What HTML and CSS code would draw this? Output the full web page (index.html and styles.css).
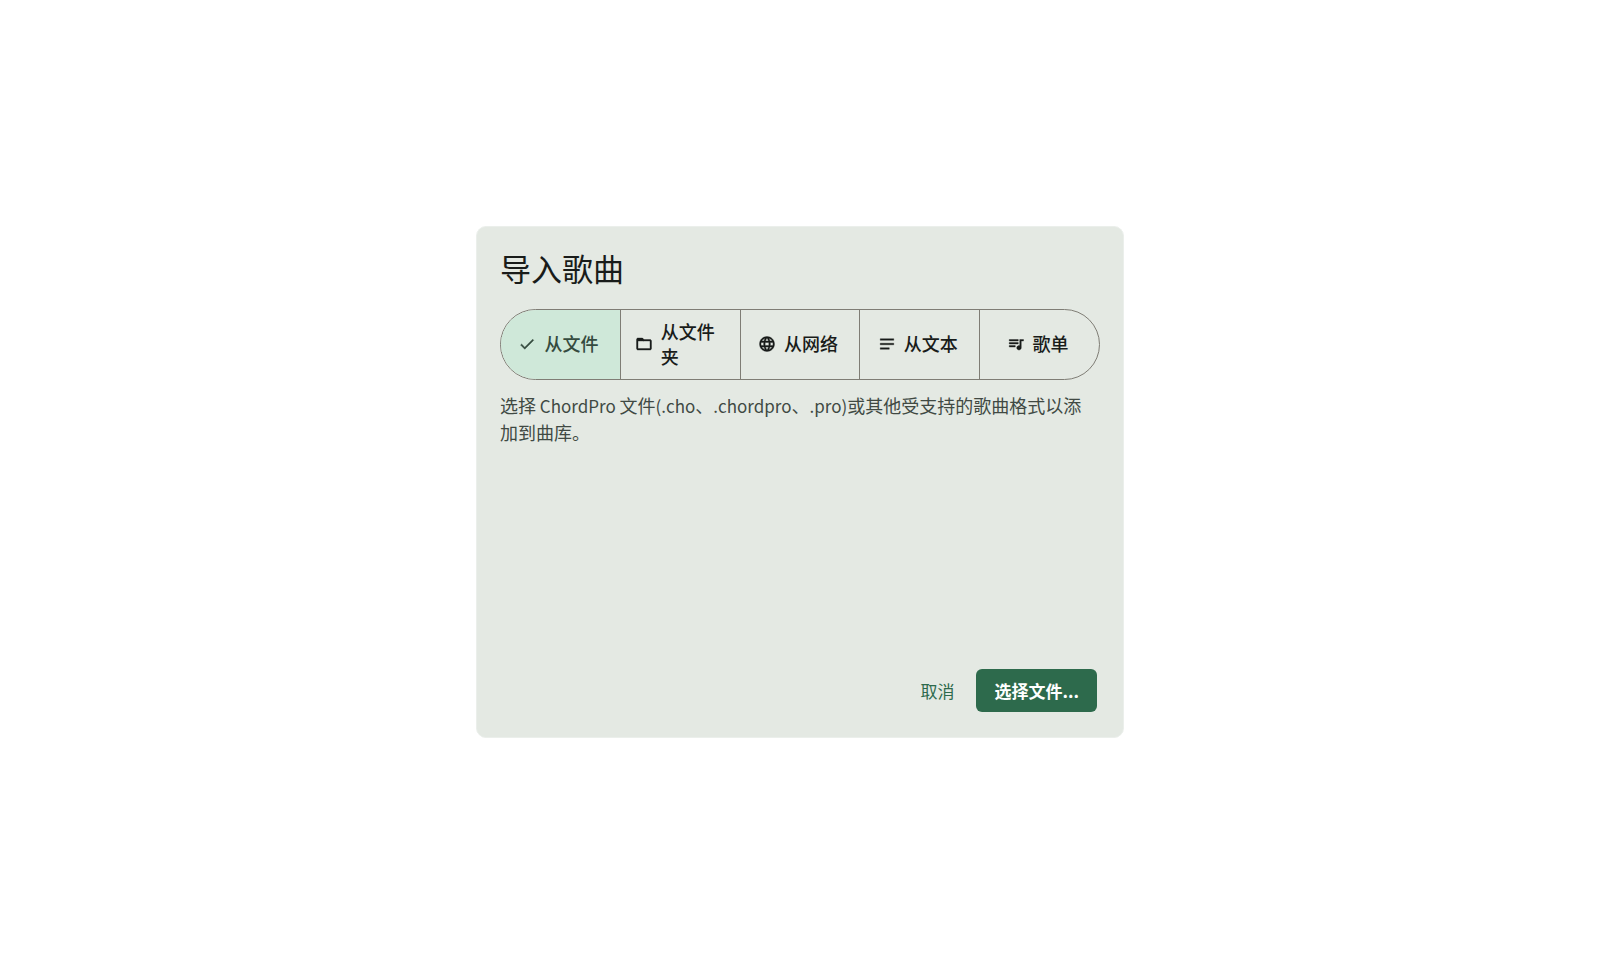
FILE: index.html
```html
<!DOCTYPE html>
<html lang="zh-CN">

	<head>
		<meta charset="UTF-8">
		<title>导入歌曲</title>
		<link rel="stylesheet" href="styles.css">
	</head>

	<body>
		<form class="dialog">
			<h1>导入歌曲</h1>

			<div class="tabs">
				<label class="tab">
					<input type="radio" name="source" checked>
					<svg viewBox="0 0 24 24"><path d="M9 16.17 4.83 12l-1.42 1.41L9 19 21 7l-1.41-1.41z"/></svg>
					<span>从文件</span>
				</label>
				<label class="tab">
					<input type="radio" name="source">
					<svg viewBox="0 0 24 24"><path d="m9.17 6 2 2H20v10H4V6h5.17M10 4H4c-1.1 0-1.99.9-1.99 2L2 18c0 1.1.9 2 2 2h16c1.1 0 2-.9 2-2V8c0-1.1-.9-2-2-2h-8l-2-2z"/><path d="M4 5h6l2 3H4z"/></svg>
					<span>从文件夹</span>
				</label>
				<label class="tab">
					<input type="radio" name="source">
					<svg viewBox="0 0 24 24"><path d="M11.99 2C6.47 2 2 6.48 2 12s4.47 10 9.99 10C17.52 22 22 17.52 22 12S17.52 2 11.99 2zm6.93 6h-2.95c-.32-1.25-.78-2.45-1.38-3.56 1.84.63 3.37 1.91 4.33 3.56zM12 4.04c.83 1.2 1.48 2.53 1.91 3.96h-3.82c.43-1.43 1.08-2.76 1.91-3.96zM4.26 14C4.1 13.36 4 12.69 4 12s.1-1.36.26-2h3.38c-.08.66-.14 1.32-.14 2s.06 1.34.14 2H4.26zm.82 2h2.95c.32 1.25.78 2.45 1.38 3.56-1.84-.63-3.37-1.9-4.33-3.56zm2.95-8H5.08c.96-1.66 2.49-2.93 4.33-3.56C8.81 5.55 8.35 6.75 8.03 8zM12 19.96c-.83-1.2-1.48-2.53-1.91-3.96h3.82c-.43 1.43-1.08 2.76-1.91 3.96zM14.34 14H9.66c-.09-.66-.16-1.32-.16-2s.07-1.35.16-2h4.68c.09.65.16 1.32.16 2s-.07 1.34-.16 2zm.25 5.56c.6-1.11 1.06-2.31 1.38-3.56h2.95c-.96 1.65-2.49 2.93-4.33 3.56zM16.36 14c.08-.66.14-1.32.14-2s-.06-1.34-.14-2h3.38c.16.64.26 1.31.26 2s-.1 1.36-.26 2h-3.38z"/></svg>
					<span>从网络</span>
				</label>
				<label class="tab">
					<input type="radio" name="source">
					<svg viewBox="0 0 24 24"><path d="M3 5h18v2H3zM3 11h18v2H3zM3 17h12v2H3z"/></svg>
					<span>从文本</span>
				</label>
				<label class="tab">
					<input type="radio" name="source">
					<svg viewBox="0 0 24 24"><path d="M15 6H3v2h12V6zm0 4H3v2h12v-2zM3 16h8v-2H3v2zM17 6v8.18c-.31-.11-.65-.18-1-.18-1.66 0-3 1.34-3 3s1.34 3 3 3 3-1.34 3-3V8h3V6h-5z"/></svg>
					<span>歌单</span>
				</label>
			</div>

			<p>选择<span class="latin"> ChordPro </span>文件<span class="latin">(.cho</span>、<span class="latin">.chordpro</span>、<span class="latin">.pro)</span>或其他受支持的歌曲格式以添加到曲库。</p>

			<footer>
				<button type="button" class="cancel">取消</button>
				<button type="button" class="choose">选择文件...</button>
			</footer>
		</form>
	</body>

</html>
```
FILE: styles.css
```css
* {
	box-sizing: border-box;
}

body {
	margin: 0;
	min-height: 100vh;
	display: flex;
	align-items: center;
	justify-content: center;
	background-color: #fff;
	color: #191c1a;
	font-family: "Noto Sans CJK SC", sans-serif;
}

.dialog {
	display: flex;
	flex-direction: column;
	width: 90%;
	max-width: 648px;
	min-height: 512px;
	padding: 23px;
	border: 1px solid #ebefeb;
	border-radius: 10px;
	background-color: #e4e9e3;
}

h1 {
	margin: 0 0 23px;
	font-size: 31px;
	font-weight: 400;
	line-height: 36px;
}

.tabs {
	display: flex;
	min-height: 71px;
	border: 1px solid #7f7d75;
	border-radius: 36px;
	overflow: hidden;
}

.tab {
	flex: 1 1 0;
	display: flex;
	align-items: center;
	justify-content: center;
	gap: 8px;
	padding: 8px 18px 10px 14px;
	font-size: 18px;
	font-weight: 500;
	line-height: 25px;
	cursor: pointer;
}

.tab + .tab {
	border-left: 1px solid #7f7d75;
}

.tab:has(input:checked) {
	background-color: #cfe8d9;
	color: #354b3f;
}

.tab input {
	position: absolute;
	opacity: 0;
	pointer-events: none;
}

.tab svg {
	flex: none;
	width: 18px;
	height: 18px;
	fill: currentColor;
	stroke: currentColor;
	stroke-width: .5;
}

p {
	margin: 12px 0 24px;
	padding-right: 8px;
	color: #404943;
	font-size: 18px;
	line-height: 27px;
}

.latin {
	font-size: 17px;
}

footer {
	display: flex;
	justify-content: flex-end;
	gap: 6px;
	margin-top: auto;
	padding: 0 3px 2px 0;
}

button {
	height: 43px;
	border: 0;
	border-radius: 6px;
	font-family: inherit;
	font-size: 17px;
	cursor: pointer;
}

.cancel {
	padding: 0 16px;
	background-color: transparent;
	color: #2d6a4c;
}

.choose {
	padding: 0 18px;
	background-color: #2d6a4c;
	color: #fff;
	font-weight: 700;
}
```
